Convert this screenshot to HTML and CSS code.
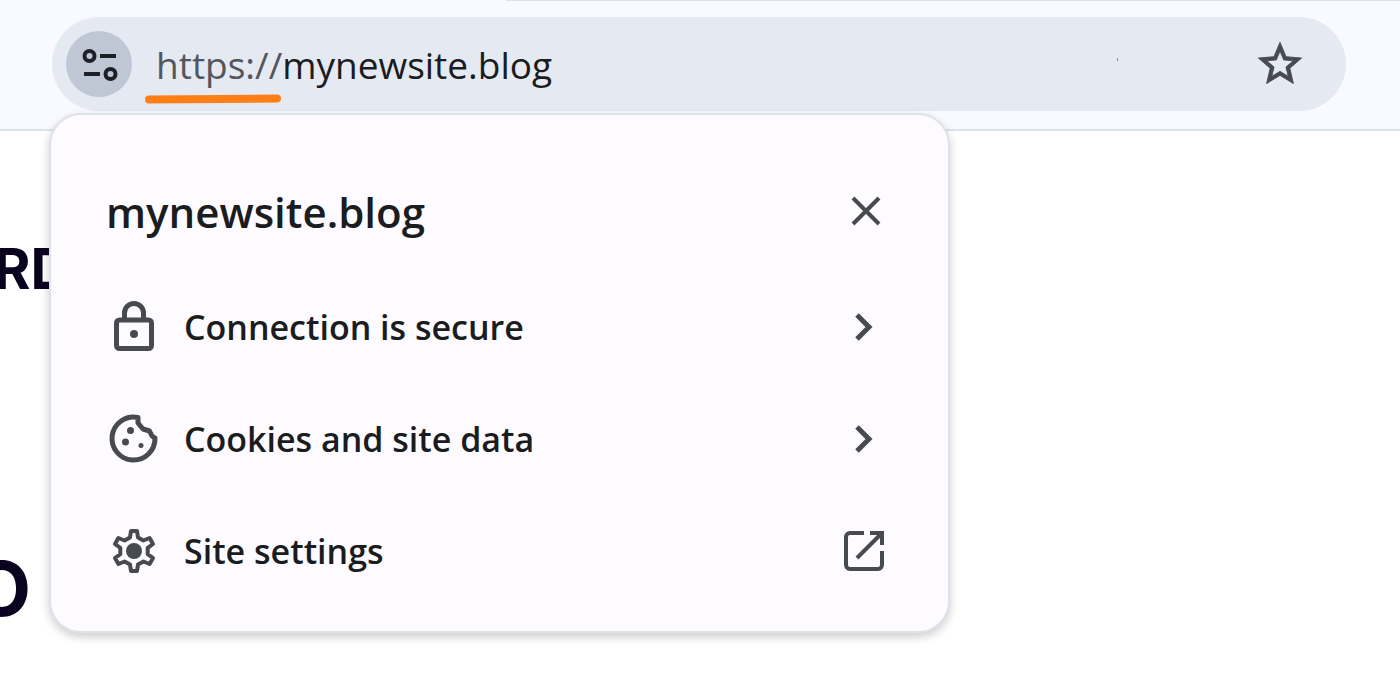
FILE: index.html
```html
<!DOCTYPE html>
<html lang="en">
<head>
  <meta charset="utf-8">
  <meta name="viewport" content="width=device-width, initial-scale=1">
  <title>mynewsite.blog</title>
  <link rel="stylesheet" href="styles.css">
</head>
<body>
  <header class="toolbar">
    <div class="tab-edge"></div>
    <form class="address-bar">
      <button class="site-info" type="button" aria-label="View site information">
        <svg class="tune-icon" viewBox="0 0 40 40">
          <circle cx="10.500" cy="12" r="5"/>
          <path d="M21 12h16M5 30h16"/>
          <circle cx="31.500" cy="30" r="5"/>
        </svg>
      </button>
      <label class="scheme" for="url">https://<svg class="marker" viewBox="0 0 136 10"><path d="M4 5.500L132 4.500"/></svg></label>
      <input class="url" id="url" type="text" value="mynewsite.blog" spellcheck="false">
      <span class="speck"></span>
      <button class="bookmark" type="button" aria-label="Bookmark this tab">
        <svg class="star-icon" viewBox="0 0 24 24">
          <path d="M22 9.24l-7.19-.62L12 2 9.19 8.63 2 9.24l5.46 4.73L5.82 21 12 17.27 18.18 21l-1.63-7.03L22 9.24zM12 15.4l-3.76 2.27 1-4.28-3.32-2.88 4.38-.38L12 6.1l1.71 4.04 4.38.38-3.32 2.88 1 4.28L12 15.4z"/>
        </svg>
      </button>
    </form>
  </header>

  <main class="page">
    <p class="word">RD</p>
    <p class="word word-large">O</p>
  </main>

  <section class="popup">
    <div class="popup-header">
      <h2 class="popup-title">mynewsite.blog</h2>
      <button class="close" type="button" aria-label="Close">
        <svg class="end-icon" viewBox="0 0 40 40"><path d="M9 7L35 33M35 7L9 33"/></svg>
      </button>
    </div>

    <button class="row" type="button">
      <svg class="row-icon" viewBox="0 0 56 56">
        <rect x="10.500" y="21" width="35" height="28.500" rx="3"/>
        <path d="M18.500 21V14a9.500 9.500 0 0 1 19 0v7"/>
        <circle class="solid" cx="28" cy="35" r="4"/>
      </svg>
      <span class="row-label">Connection is secure</span>
      <svg class="end-icon chevron" viewBox="0 0 40 40"><path d="M13 8L25 20L13 32"/></svg>
    </button>

    <button class="row" type="button">
      <svg class="row-icon" viewBox="0 0 56 56">
        <path d="M32 6.500A21.500 21.500 0 1 0 49 27L46 25L43.500 20L37 18L32 12z"/>
        <circle class="solid" cx="24.500" cy="19.500" r="3.500"/>
        <circle class="solid" cx="19.500" cy="31" r="3.500"/>
        <circle class="solid" cx="35" cy="34.500" r="2.500"/>
      </svg>
      <span class="row-label">Cookies and site data</span>
      <svg class="end-icon chevron" viewBox="0 0 40 40"><path d="M13 8L25 20L13 32"/></svg>
    </button>

    <button class="row" type="button">
      <svg class="row-icon gear" viewBox="-28 -28 56 56">
        <path d="M-4-13.500L-3-20H3L4-13.500L9.400-10.500L15.600-13L19-7L13.700-3.100V3.100L19 7L15.600 13L9.400 10.500L4 13.500L3 20H-3L-4 13.500L-9.400 10.500L-15.600 13L-19 7L-13.700 3.100V-3.100L-19-7L-15.600-13L-9.400-10.500z"/>
        <circle class="solid" cx="0" cy="0" r="8"/>
      </svg>
      <span class="row-label">Site settings</span>
      <svg class="end-icon" viewBox="0 0 40 40">
        <path d="M20 2H6a4 4 0 0 0-4 4v28a4 4 0 0 0 4 4h28a4 4 0 0 0 4-4V20M26 2H38V14M37 3L13 27"/>
      </svg>
    </button>
  </section>
</body>
</html>
```
FILE: styles.css
```css
* {
  box-sizing: border-box;
}

body {
  margin: 0;
  background: #fff;
  color: #1b1c20;
  font-family: "Open Sans", "Noto Sans", sans-serif;
  overflow: hidden;
}

button,
input {
  font: inherit;
  color: inherit;
  border: 0;
  padding: 0;
  background: none;
}

svg {
  display: block;
  flex: none;
}

/* toolbar */
.toolbar {
  background: #f9faff;
  border-bottom: 2px solid #dde2eb;
  padding: 0 54px 18px 52px;
}

.tab-edge {
  height: 1px;
  margin: 0 -54px 16px 454px;
  background: #dde2eb;
}

.address-bar {
  display: flex;
  align-items: center;
  height: 94px;
  padding: 0 40px 0 14px;
  border-radius: 47px;
  background: #e5e9f2;
  font-size: 37px;
}

.site-info {
  display: flex;
  align-items: center;
  justify-content: center;
  width: 66px;
  height: 66px;
  margin-right: 24px;
  border-radius: 50%;
  background: #bfc7d4;
}

.tune-icon {
  width: 40px;
  height: 40px;
  fill: none;
  stroke: #1d2026;
  stroke-width: 4;
}

.scheme {
  position: relative;
  color: #53565d;
}

.marker {
  position: absolute;
  left: -11px;
  bottom: -14px;
  width: 136px;
  height: 10px;
  fill: none;
  stroke: #ff7f16;
  stroke-width: 8;
  stroke-linecap: round;
}

.url {
  flex: 1;
  min-width: 0;
  outline: 0;
}

.speck {
  width: 1px;
  height: 3px;
  margin: 0 136px 10px 0;
  background: #8b8f98;
}

.star-icon {
  width: 52px;
  height: 52px;
  fill: #474a50;
  stroke: #474a50;
  stroke-width: 0.4;
}

/* page behind the popup */
.page {
  padding-top: 104px;
  width: 71px;
}

.word {
  display: flex;
  justify-content: flex-end;
  margin: 0;
  color: #0a0320;
  font-family: Inter, sans-serif;
  font-size: 56px;
  font-weight: 700;
  line-height: 68px;
}

.word-large {
  margin: 239px 40px 0 0;
  font-size: 76px;
  line-height: 92px;
}

/* site information popup */
.popup {
  position: absolute;
  top: 113px;
  left: 49px;
  width: 901px;
  max-width: calc(100% - 64px);
  padding: 40px 0 24px;
  border: 2px solid #dfe2e8;
  border-radius: 32px;
  background: #fdfbff;
  box-shadow: 0 4px 10px rgba(0, 0, 0, 0.2);
}

.popup-header,
.row {
  display: flex;
  align-items: center;
  width: 100%;
  padding: 0 64px 0 55px;
}

.popup-header {
  height: 112px;
  margin-bottom: 4px;
}

.popup-title {
  flex: 1;
  margin: 0;
  font-size: 42px;
  font-weight: 600;
}

.row {
  height: 112px;
  font-size: 34px;
  font-weight: 600;
  text-align: left;
}

.row-label {
  flex: 1;
  margin-left: 22px;
}

.row-icon,
.end-icon {
  fill: none;
  stroke: #474a50;
  stroke-width: 4;
}

.row-icon {
  width: 56px;
  height: 56px;
  stroke-width: 5;
  stroke-linejoin: round;
}

.row-icon .solid {
  fill: #474a50;
  stroke: none;
}

.row-icon.gear {
  stroke-width: 4;
}

.end-icon {
  width: 40px;
  height: 40px;
}

.chevron {
  stroke-width: 5;
}
```
